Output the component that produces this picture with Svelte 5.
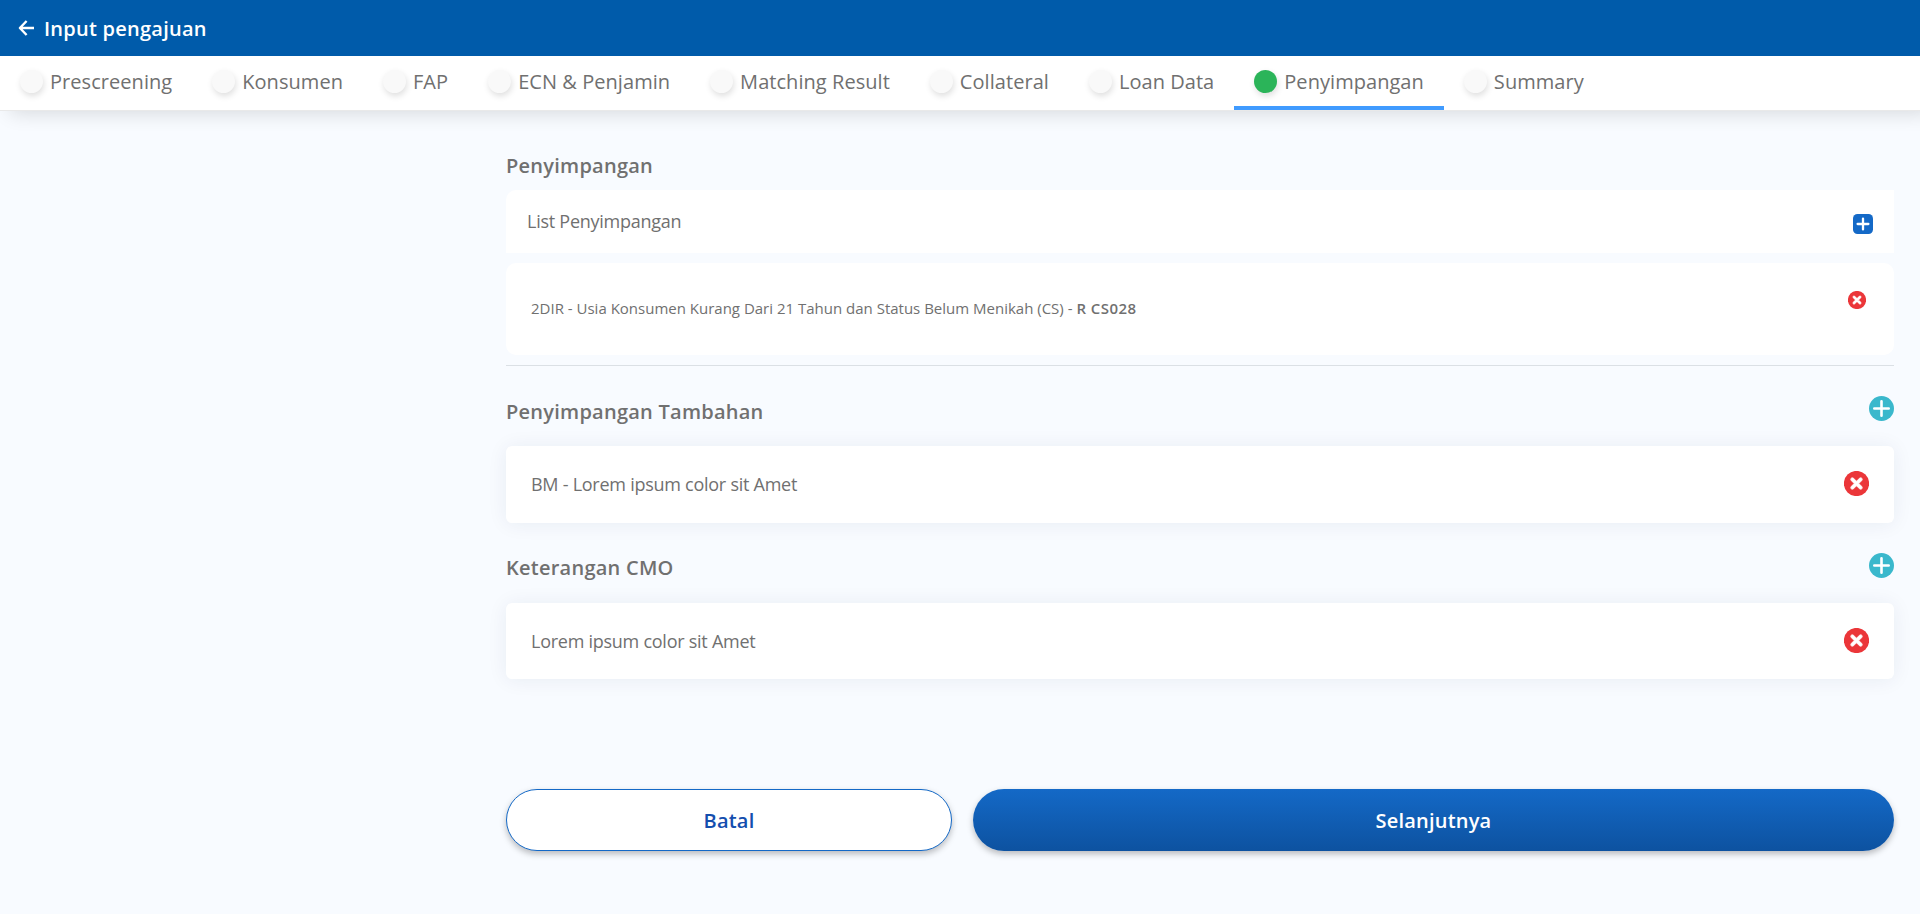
<script>
  const tabs = ['Prescreening', 'Konsumen', 'FAP', 'ECN & Penjamin', 'Matching Result', 'Collateral', 'Loan Data', 'Penyimpangan', 'Summary'];
  let active = $state(7);
</script>

{#snippet remove(size)}
  <button class="icon" aria-label="Hapus">
    <svg width={size} height={size} viewBox="0 0 25 25">
      <circle cx="12.5" cy="12.5" r="12.6" fill="#eb3639" />
      <path d="M8.3 8.3l8.4 8.4M16.7 8.3l-8.4 8.4" stroke="#fbdcdc" stroke-width="4" stroke-linecap="round" />
      <path d="M8.5 8.5l8 8M16.5 8.5l-8 8" stroke="#fff" stroke-width="2.6" stroke-linecap="round" />
    </svg>
  </button>
{/snippet}

{#snippet add()}
  <button class="icon" aria-label="Tambah">
    <svg width="25" height="25" viewBox="0 0 25 25">
      <circle cx="12.5" cy="12.5" r="12.5" fill="#3ab8cc" />
      <path d="M12.5 5.3v14.4M5.3 12.5h14.4" stroke="#fff" stroke-width="2.6" stroke-linecap="round" />
    </svg>
  </button>
{/snippet}

<div class="page">
  <header>
    <svg width="17" height="16" viewBox="0 0 17 16">
      <path d="M16 8H2.4M8.6 1L1.9 8l6.7 7" fill="none" stroke="#fff" stroke-width="2.4" stroke-linecap="butt" stroke-linejoin="round" />
    </svg>
    <h1>Input pengajuan</h1>
  </header>

  <nav>
    {#each tabs as tab, i}
      <button class="tab" class:active={i === active} onclick={() => (active = i)}>
        <span class="dot"></span><span class="label">{tab}</span>
      </button>
    {/each}
  </nav>

  <main>
    <h2>Penyimpangan</h2>
    <div class="card list-head">
      <span>List Penyimpangan</span>
      <button class="icon" aria-label="Tambah">
        <svg width="20" height="20" viewBox="0 0 20 20">
          <rect width="20" height="20" rx="4.5" fill="#1469c7" />
          <path d="M10 4.6v10.8M4.6 10h10.8" stroke="#fff" stroke-width="2.3" stroke-linecap="round" />
        </svg>
      </button>
    </div>
    <div class="card item">
      <p>2DIR - Usia Konsumen Kurang Dari 21 Tahun dan Status Belum Menikah (CS) - <b>R CS028</b></p>
      {@render remove(18)}
    </div>
    <hr />

    <div class="row first"><h2>Penyimpangan Tambahan</h2>{@render add()}</div>
    <div class="card note tall"><span>BM - Lorem ipsum color sit Amet</span>{@render remove(25)}</div>

    <div class="row"><h2>Keterangan CMO</h2>{@render add()}</div>
    <div class="card note"><span>Lorem ipsum color sit Amet</span>{@render remove(25)}</div>

    <div class="actions">
      <button class="cancel">Batal</button>
      <button class="next">Selanjutnya</button>
    </div>
  </main>
</div>

<style>
  :global(body) { background: #f8fbff; }
  .page {
    box-sizing: border-box;
    height: 914px;
    overflow: hidden;
    background: #f8fbff;
    color: #707070;
    font-family: 'Open Sans', sans-serif;
  }
  button { padding: 0; border: 0; background: none; font: inherit; color: inherit; cursor: pointer; }
  svg { display: block; }
  header {
    position: relative;
    z-index: 1;
    display: flex;
    align-items: center;
    gap: 9px;
    height: 56px;
    padding-left: 18px;
    background: #005baa;
    color: #fff;
  }
  h1 { margin: 2px 0 0; font-size: 20px; font-weight: 600; line-height: 28px; letter-spacing: 0.25px; }
  nav {
    display: flex;
    height: 54px;
    background: #fff;
    border-bottom: 1px solid #e9e9e9;
    box-shadow: 10px 2px 20px rgba(0, 0, 0, 0.14);
  }
  .tab {
    display: flex;
    box-sizing: border-box;
    height: 54px;
    padding: 14px 20px 0;
    border-bottom: 4px solid transparent;
    font-size: 20px;
    letter-spacing: 0.05px;
  }
  .tab.active { border-color: #409bff; }
  .dot {
    width: 23px;
    height: 23px;
    margin-right: 7px;
    border-radius: 50%;
    background: #f9f9f9;
    box-shadow: 1px 3px 6px rgba(0, 0, 0, 0.13);
  }
  .active .dot { background: #2bb459; }
  .label { line-height: 24px; }
  main { padding: 40px 26px 0 506px; }
  h2 { margin: 0; font-size: 20px; font-weight: 600; line-height: 30px; letter-spacing: 0.25px; }
  .card { display: flex; box-sizing: border-box; justify-content: space-between; background: #fff; font-size: 18px; letter-spacing: -0.26px; }
  .list-head { height: 63px; margin-top: 9px; padding: 17px 21px; border-radius: 10px 0 0 0; }
  .list-head span { line-height: 28px; }
  .list-head .icon { margin-top: 7px; }
  .icon { align-self: flex-start; }
  .item { height: 92px; margin-top: 10px; padding: 28px 28.5px 0 25px; border-radius: 10px; font-size: 15px; letter-spacing: 0; }
  .item p { margin: 5px 0 0; line-height: 24px; }
  .item b { font-weight: 600; letter-spacing: 0.45px; }
  hr { height: 1px; margin: 10px 0 0; border: 0; background: #dbe0e5; }
  .row { display: flex; justify-content: space-between; height: 30px; margin-top: 30px; }
  .first h2 { padding-top: 1px; }
  .note { height: 76px; margin-top: 20px; padding: 25px; border-radius: 6px; box-shadow: 0 1px 20px rgba(0, 40, 80, 0.07); }
  .note span { line-height: 26px; }
  .tall { height: 77px; }
  .actions { display: grid; grid-template-columns: 446px 1fr; gap: 21px; margin-top: 110px; }
  .actions button {
    box-sizing: border-box;
    height: 62px;
    border-radius: 31px;
    box-shadow: 0 3px 6px rgba(0, 0, 0, 0.26);
    font-size: 20px;
    font-weight: 600;
    letter-spacing: 0.2px;
  }
  .actions .cancel { background: #fff; border: 1px solid #1469c7; color: #144eae; }
  .actions .next { background: linear-gradient(#1469c7, #0d52a0); color: #fff; }
</style>
